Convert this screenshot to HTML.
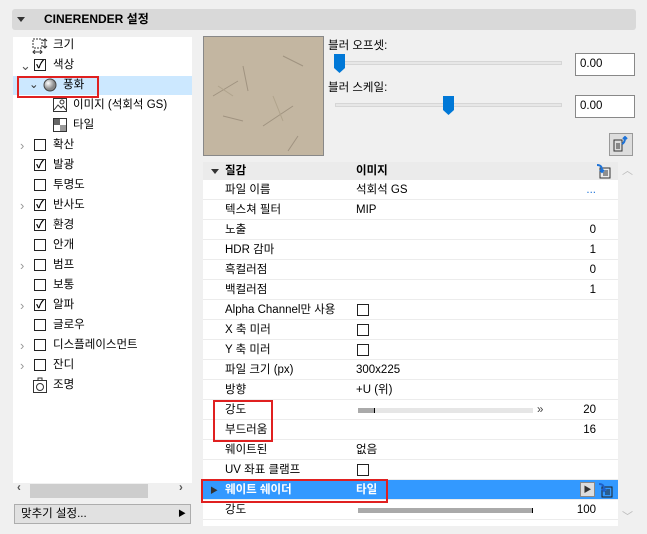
<!DOCTYPE html>
<html><head><meta charset="utf-8"><style>
*{margin:0;padding:0;box-sizing:border-box}
body{width:647px;height:534px;background:#f0f0f0;font-family:"Liberation Sans","Noto Sans CJK KR",sans-serif;font-size:11.5px;color:#000;position:relative;overflow:hidden}
.a{position:absolute}
.hdr{left:12px;top:9px;width:624px;height:21px;background:#d9d9d9;border-radius:3px;font-weight:bold;font-size:12px;line-height:21px;padding-left:32px}
.tri{position:absolute;width:0;height:0;border-left:4px solid transparent;border-right:4px solid transparent;border-top:5px solid #333}
.tree{left:13px;top:37px;width:179px;height:446px;background:#fff}
.ti{position:absolute;left:0;width:179px;height:20px;line-height:21px}
.ti span.t{position:absolute;left:40px}
.cb{position:absolute;left:21px;top:4px;width:12px;height:12px;border:1px solid #222;background:#fff;font-size:11px;line-height:10px;text-align:center;font-weight:bold}
.chev{position:absolute;left:7px;top:0;color:#999;font-size:13px}
.tbl{left:203px;top:162px;width:415px;height:364px;background:#fff}
.row{position:absolute;left:0;width:415px;height:20px;border-bottom:1px solid #ececec;line-height:21px}
.row .l{position:absolute;left:22px}
.row .v{position:absolute;left:153px}
.row .r{position:absolute;right:22px}
.sq{position:absolute;left:154px;top:4px;width:12px;height:12px;border:1px solid #222}
.inp{background:#fff;border:1px solid #888;height:23px;width:60px;line-height:21px;padding-left:4px}
</style></head><body>
<div class="a hdr"><div class="tri" style="left:5px;top:8px"></div>CINERENDER 설정</div>

<div class="a tree">
 <div class="ti" style="top:-2px"><svg class="a" style="left:19px;top:3px" width="16" height="16"><rect x="1" y="1" width="9" height="9" fill="none" stroke="#333" stroke-dasharray="2,1"/><path d="M13 1v9M11 3l2-2 2 2M11 8l2 2 2-2M1 14h9M3 12l-2 2 2 2M8 12l2 2-2 2" stroke="#333" fill="none"/></svg><span class="t">크기</span></div>
 <div class="ti" style="top:18px"><span class="chev" style="color:#555">⌄</span><div class="cb">✓</div><span class="t">색상</span></div>
 <div class="ti" style="top:39px;background:#cce8ff;height:19px"></div>
 <div class="a" style="left:4px;top:39px;width:82px;height:22px;border:2px solid #e02020"></div>
 <div class="ti" style="top:38px"><span class="a" style="left:16px;color:#333">⌄</span><svg class="a" style="left:30px;top:3px" width="14" height="14"><defs><radialGradient id="g" cx=".35" cy=".35"><stop offset="0" stop-color="#fff"/><stop offset="1" stop-color="#888"/></radialGradient></defs><circle cx="7" cy="7" r="6" fill="url(#g)" stroke="#444"/></svg><span class="t" style="left:50px">풍화</span></div>
 <div class="ti" style="top:58px"><svg class="a" style="left:40px;top:3px" width="14" height="14"><rect x=".5" y=".5" width="13" height="13" fill="#fff" stroke="#333"/><path d="M1 12l4-5 3 3 2-2 3 4" stroke="#333" fill="none"/><circle cx="9" cy="4" r="2" fill="none" stroke="#333"/></svg><span class="t" style="left:60px">이미지 (석회석 GS)</span></div>
 <div class="ti" style="top:78px"><svg class="a" style="left:40px;top:3px" width="14" height="14"><rect x=".5" y=".5" width="13" height="13" fill="#fff" stroke="#333"/><rect x="1" y="1" width="6" height="6" fill="#666"/><rect x="7" y="7" width="6" height="6" fill="#999"/></svg><span class="t" style="left:60px">타일</span></div>
 <div class="ti" style="top:98px"><span class="chev">›</span><div class="cb"></div><span class="t">확산</span></div>
 <div class="ti" style="top:118px"><div class="cb">✓</div><span class="t">발광</span></div>
 <div class="ti" style="top:138px"><div class="cb"></div><span class="t">투명도</span></div>
 <div class="ti" style="top:158px"><span class="chev">›</span><div class="cb">✓</div><span class="t">반사도</span></div>
 <div class="ti" style="top:178px"><div class="cb">✓</div><span class="t">환경</span></div>
 <div class="ti" style="top:198px"><div class="cb"></div><span class="t">안개</span></div>
 <div class="ti" style="top:218px"><span class="chev">›</span><div class="cb"></div><span class="t">범프</span></div>
 <div class="ti" style="top:238px"><div class="cb"></div><span class="t">보통</span></div>
 <div class="ti" style="top:258px"><span class="chev">›</span><div class="cb">✓</div><span class="t">알파</span></div>
 <div class="ti" style="top:278px"><div class="cb"></div><span class="t">글로우</span></div>
 <div class="ti" style="top:298px"><span class="chev">›</span><div class="cb"></div><span class="t">디스플레이스먼트</span></div>
 <div class="ti" style="top:318px"><span class="chev">›</span><div class="cb"></div><span class="t">잔디</span></div>
 <div class="ti" style="top:338px"><svg class="a" style="left:20px;top:2px" width="14" height="16"><rect x=".5" y="3.5" width="13" height="12" fill="none" stroke="#333"/><circle cx="7" cy="10" r="3.5" fill="none" stroke="#333"/><path d="M5 4V1h4v3" stroke="#333" fill="none"/></svg><span class="t">조명</span></div>
</div>
<div class="a" style="left:13px;top:483px;width:179px;height:15px;background:#f0f0f0"></div>
<div class="a" style="left:30px;top:484px;width:118px;height:14px;background:#cdcdcd"></div>
<div class="a" style="left:17px;top:482px;color:#555;font-weight:bold">‹</div>
<div class="a" style="left:179px;top:482px;color:#555;font-weight:bold">›</div>
<div class="a" style="left:14px;top:504px;width:177px;height:20px;border:1px solid #adadad;background:#e1e1e1;line-height:18px;padding-left:6px">맞추기 설정...<span class="a" style="right:4px;top:0;font-size:8px">▶</span></div>

<svg class="a" style="left:203px;top:36px" width="121" height="120"><rect x=".5" y=".5" width="120" height="119" fill="#c3b6a1" stroke="#888"/><path d="M10 60l25-15M20 80l20 5M60 90l30-20M80 20l20 10M40 30l5 25M95 100l-10 15" stroke="#a09380" fill="none"/><path d="M15 50l15 10M70 60l10 25" stroke="#b0a38c" fill="none"/></svg>
<div class="a" style="left:328px;top:37px">블러 오프셋:</div>
<div class="a" style="left:335px;top:61px;width:227px;height:4px;background:#e7e7e7;border:1px solid #d6d6d6"></div>
<svg class="a" style="left:334px;top:54px" width="11" height="20"><path d="M0 0h11v14l-5.5 5L0 14z" fill="#0078d7"/></svg>
<div class="a inp" style="left:575px;top:53px">0.00</div>
<div class="a" style="left:328px;top:79px">블러 스케일:</div>
<div class="a" style="left:335px;top:103px;width:227px;height:4px;background:#e7e7e7;border:1px solid #d6d6d6"></div>
<svg class="a" style="left:443px;top:96px" width="11" height="20"><path d="M0 0h11v14l-5.5 5L0 14z" fill="#0078d7"/></svg>
<div class="a inp" style="left:575px;top:95px">0.00</div>
<div class="a" style="left:609px;top:133px;width:24px;height:23px;border:1px solid #999;background:#ddd"></div>
<svg class="a" style="left:613px;top:136px" width="17" height="17"><path d="M1 4h8v11H1zM3 8h4M3 10h4M3 12h4" stroke="#333" fill="none"/><path d="M9 8c2-1 3-3 3-6M10 3l2-2 2 2" stroke="#1e73d8" stroke-width="2" fill="none"/></svg>

<div class="a tbl">
 <div class="row" style="top:0;height:18px;background:#ebebeb;font-weight:bold;line-height:18px;border:none"><div class="tri" style="left:8px;top:7px"></div><span class="l">질감</span><span class="v">이미지</span>
 <svg class="a" style="left:393px;top:1px" width="15" height="16"><path d="M4 5h10v10H4zM7 8h5M7 10h5M7 12h5" stroke="#333" fill="none"/><path d="M1 2c4 0 5 2 5 6M4 7l2 2 2-2" stroke="#1e73d8" stroke-width="2" fill="none"/></svg></div>
 <div class="row" style="top:18px"><span class="l">파일 이름</span><span class="v">석회석 GS</span><span class="r" style="color:#1e73d8">...</span></div>
 <div class="row" style="top:38px"><span class="l">텍스쳐 필터</span><span class="v">MIP</span></div>
 <div class="row" style="top:58px"><span class="l">노출</span><span class="r">0</span></div>
 <div class="row" style="top:78px"><span class="l">HDR 감마</span><span class="r">1</span></div>
 <div class="row" style="top:98px"><span class="l">흑컬러점</span><span class="r">0</span></div>
 <div class="row" style="top:118px"><span class="l">백컬러점</span><span class="r">1</span></div>
 <div class="row" style="top:138px"><span class="l">Alpha Channel만 사용</span><div class="sq"></div></div>
 <div class="row" style="top:158px"><span class="l">X 축 미러</span><div class="sq"></div></div>
 <div class="row" style="top:178px"><span class="l">Y 축 미러</span><div class="sq"></div></div>
 <div class="row" style="top:198px"><span class="l">파일 크기 (px)</span><span class="v">300x225</span></div>
 <div class="row" style="top:218px"><span class="l">방향</span><span class="v">+U (위)</span></div>
 <div class="row" style="top:238px"><span class="l">강도</span><div class="a" style="left:155px;top:8px;width:175px;height:5px;background:#e6e6e6"></div><div class="a" style="left:155px;top:8px;width:17px;height:5px;background:#aaa;border-right:1px solid #000"></div><span class="a" style="left:334px;color:#444">»</span><span class="r">20</span></div>
 <div class="row" style="top:258px"><span class="l">부드러움</span><span class="r">16</span></div>
 <div class="row" style="top:278px"><span class="l">웨이트된</span><span class="v">없음</span></div>
 <div class="row" style="top:298px"><span class="l">UV 좌표 클램프</span><div class="sq"></div></div>
 <div class="row" style="top:318px;background:#3399ff;color:#fff;font-weight:bold"><span class="a" style="left:7px;font-size:8px;color:#333">▶</span><span class="l">웨이트 쉐이더</span><span class="v">타일</span>
 <div class="a" style="left:377px;top:2px;width:15px;height:15px;background:#ddd;border:1px solid #888;font-size:8px;color:#333;text-align:center;line-height:13px">▶</div>
 <svg class="a" style="left:395px;top:2px" width="15" height="16"><path d="M4 5h10v10H4zM7 8h5M7 10h5M7 12h5" stroke="#222" fill="none"/><path d="M1 2c4 0 5 2 5 6M4 7l2 2 2-2" stroke="#1e60c8" stroke-width="2" fill="none"/></svg></div>
 <div class="row" style="top:338px"><span class="l">강도</span><div class="a" style="left:155px;top:8px;width:175px;height:5px;background:#aaa;border-right:1px solid #000"></div><span class="r">100</span></div>
</div>
<div class="a" style="left:213px;top:400px;width:60px;height:42px;border:2px solid #e02020"></div>
<div class="a" style="left:201px;top:479px;width:187px;height:24px;border:2px solid #e02020"></div>
<div class="a" style="left:622px;top:162px;color:#bbb;font-size:11px">︿</div>
<div class="a" style="left:622px;top:508px;color:#bbb;font-size:11px">﹀</div>
</body></html>
